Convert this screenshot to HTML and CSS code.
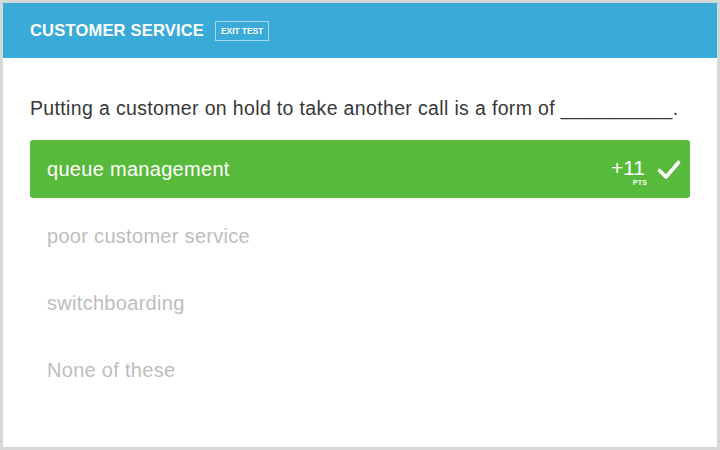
FILE: index.html
```html
<!DOCTYPE html>
<html>
<head>
<meta charset="utf-8">
<link rel="stylesheet" href="styles.css">
</head>
<body>
<div class="frame">
  <header class="header">
    <span class="title">CUSTOMER SERVICE</span>
    <span class="exit">EXIT TEST</span>
  </header>
  <main class="content">
    <p class="question">Putting a customer on hold to take another call is a form of __________.</p>
    <div class="options">
      <div class="option correct">
        <span class="label">queue management</span>
        <span class="score">
          <span class="points"><span class="num">+11</span><span class="pts">PTS</span></span>
          <svg class="check" width="24" height="20" viewBox="0 0 24 20"><path d="M2.5 10.5 L9 17 L21.5 2.5" fill="none" stroke="#fff" stroke-width="3.6" stroke-linecap="round" stroke-linejoin="round"/></svg>
        </span>
      </div>
      <div class="option"><span class="label">poor customer service</span></div>
      <div class="option"><span class="label">switchboarding</span></div>
      <div class="option"><span class="label">None of these</span></div>
    </div>
  </main>
</div>
</body>
</html>
```

FILE: styles.css
```css
* { box-sizing: border-box; }
html, body { margin: 0; padding: 0; }
body {
  width: 720px;
  height: 450px;
  background: #fff;
  font-family: "Liberation Sans", Arial, sans-serif;
  overflow: hidden;
}
.frame {
  width: 720px;
  height: 450px;
  border: 3px solid #d7d7d7;
  display: flex;
  flex-direction: column;
}
.header {
  height: 55px;
  background: #3aabd9;
  display: flex;
  align-items: center;
  padding-left: 27px;
  gap: 11px;
  flex-shrink: 0;
}
.title {
  color: #fff;
  font-weight: bold;
  font-size: 16.5px;
  letter-spacing: 0.2px;
}
.exit {
  color: #fff;
  font-weight: bold;
  font-size: 8.5px;
  border: 1px solid rgba(255,255,255,0.55);
  padding: 4px 5px 3px;
  line-height: 11px;
  letter-spacing: -0.1px;
}
.content {
  padding: 0 27px;
}
.question {
  margin: 39px 0 0;
  font-size: 19.5px;
  color: #383838;
  line-height: 23px;
  letter-spacing: 0.35px;
  white-space: nowrap;
}
.options {
  margin-top: 20px;
  display: flex;
  flex-direction: column;
  gap: 9px;
}
.option {
  height: 58px;
  display: flex;
  align-items: center;
  justify-content: space-between;
  padding: 1px 9px 0 17px;
  border-radius: 3px;
  font-size: 20px;
  color: #bdbdbd;
  letter-spacing: 0.3px;
}
.option.correct {
  background: #58ba3a;
  color: #fff;
}
.score {
  display: flex;
  align-items: center;
  gap: 12px;
}
.points {
  display: flex;
  flex-direction: column;
  align-items: flex-end;
  margin-top: 4px;
}
.num {
  font-size: 21px;
  line-height: 21px;
  letter-spacing: 0;
}
.pts {
  font-size: 7px;
  font-weight: bold;
  line-height: 9px;
  letter-spacing: 0.2px;
  margin-right: -2px;
}
.check { display: block; margin-top: 1px; }
```
